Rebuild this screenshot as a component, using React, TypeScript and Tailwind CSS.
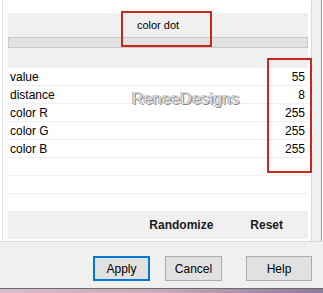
const rows = [
  { label: 'value', value: '55' },
  { label: 'distance', value: '8' },
  { label: 'color R', value: '255' },
  { label: 'color G', value: '255' },
  { label: 'color B', value: '255' },
  { label: '', value: '' },
  { label: '', value: '' },
];

function DialogButton({ label, primary, width }: { label: string; primary?: boolean; width: string }) {
  return (
    <button
      className={`${width} h-[25px] text-[12px] text-black bg-[#e1e1e1] border ${
        primary ? 'border-[#0078d7] shadow-[inset_0_0_0_1px_#0078d7]' : 'border-[#adadad]'
      }`}
    >
      {label}
    </button>
  );
}

export default function App() {
  return (
    <div
      className="relative w-[323px] h-[293px] overflow-hidden bg-[#f0f0f0] flex flex-col"
      style={{ fontFamily: '"Liberation Sans", Arial, sans-serif' }}
    >
      {/* Property panel */}
      <div className="flex h-[242px] border-b border-[#dcdcdc] bg-white">
        <div className="w-[311px] h-full pl-[2px]">
          <div className="h-full border-l border-[#e4e4e4] pl-[5px] pt-[13px] flex flex-col w-[306px]">
            {/* Header */}
            <div className="h-[55px] bg-[#f0f0f0] flex flex-col">
              <div className="h-[24px] flex items-center justify-center text-[11px] text-black pt-[1px]">
                color dot
              </div>
              <div className="h-[11px] border border-[#c8c8c8] bg-[#e2e2e2]" />
            </div>

            {/* Parameter list */}
            <div className="relative h-[143px] flex flex-col">
              {rows.map((r, i) => (
                <div
                  key={i}
                  className="h-[18px] shrink-0 flex items-center justify-between border-b border-[#efefef] pl-[2px] pr-[3px] text-[12px] text-black"
                >
                  <span>{r.label}</span>
                  <span>{r.value}</span>
                </div>
              ))}
              <span
                className="absolute left-[124px] top-[19px] text-[16px] text-[#dcdcdc] tracking-[0.2px]"
                style={{ textShadow: '1px 1px 0 #8a8a8a, -1px 0 0 #b0b0b0' }}
              >
                ReneeDesigns
              </span>
            </div>

            {/* Footer actions */}
            <div className="h-[28px] bg-[#f0f0f0] flex items-center justify-end gap-[37px] pr-[25px] text-[12px] font-bold text-[#1a1a1a]">
              <span>Randomize</span>
              <span>Reset</span>
            </div>
          </div>
        </div>
        <div className="w-[11px] h-full bg-[#f0f0f0] border-l border-[#d9d9d9] border-r border-r-[#a0a0a0]" />
      </div>

      {/* Dialog buttons */}
      <div className="h-[46px] flex items-start pt-[14px] pl-[93px]">
        <DialogButton label="Apply" primary width="w-[57px]" />
        <div className="w-[15px]" />
        <DialogButton label="Cancel" width="w-[57px]" />
        <div className="w-[24px]" />
        <DialogButton label="Help" width="w-[66px]" />
      </div>
      <div className="h-px bg-[#6a6a6a]" />
      <div className="flex-1 bg-gradient-to-r from-[#d9bccb] via-[#c9a9bd] to-[#8e7a9a]" />

      {/* Annotation boxes */}
      <div className="absolute left-[121px] top-[11px] w-[91px] h-[36px] border-2 border-[#c8281e]" />
      <div className="absolute left-[267px] top-[58px] w-[45px] h-[115px] border-2 border-[#c8281e]" />
    </div>
  );
}
